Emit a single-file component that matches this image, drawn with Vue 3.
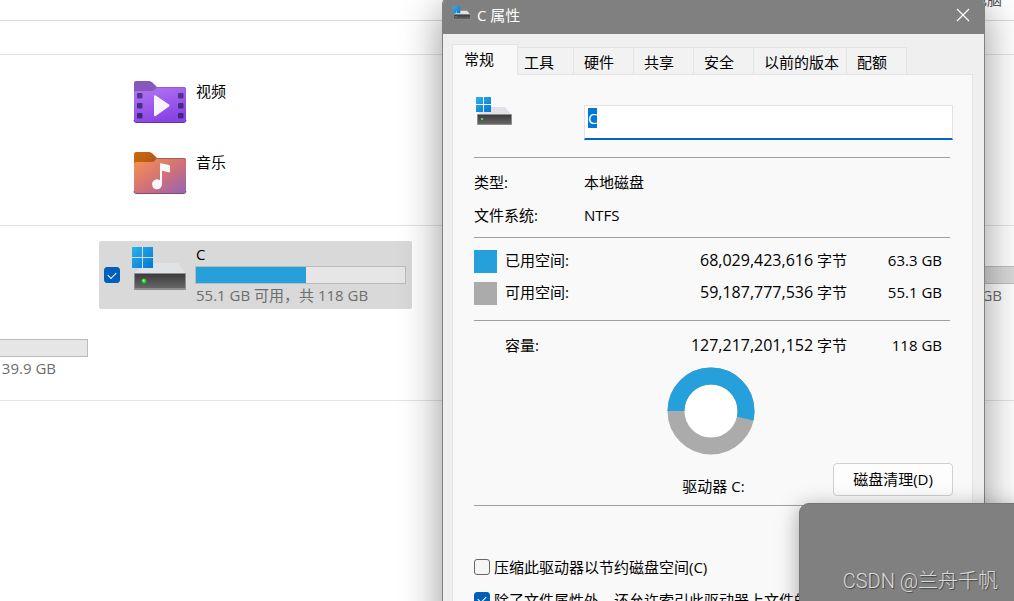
<script setup>
import { ref, onMounted } from 'vue'

const tabs = ['常规', '工具', '硬件', '共享', '安全', '以前的版本', '配额']
const activeTab = ref('常规')
const label = ref('C')
const labelBox = ref(null)
const selected = ref(true)
const compress = ref(false)
const indexed = ref(true)

const usedPercent = 53.5
const usage = [
  { kind: 'used', name: '已用空间:', bytes: '68,029,423,616', size: '63.3 GB' },
  { kind: 'free', name: '可用空间:', bytes: '59,187,777,536', size: '55.1 GB' },
]

onMounted(() => {
  labelBox.value.focus()
  labelBox.value.select()
})
</script>

<template>
  <div class="desktop">
    <svg class="defs" width="0" height="0" aria-hidden="true">
      <defs>
        <linearGradient id="win" x1="0" y1="0" x2="1" y2="1">
          <stop offset="0" stop-color="#2eb0ec" /><stop offset="1" stop-color="#0078d4" />
        </linearGradient>
        <linearGradient id="front" x1="0" y1="0" x2="0" y2="1">
          <stop offset="0" stop-color="#3c3c3c" /><stop offset="1" stop-color="#676767" />
        </linearGradient>
        <linearGradient id="violet" x1="0" y1="0" x2="0.4" y2="1">
          <stop offset="0" stop-color="#b578f4" /><stop offset="1" stop-color="#8a44e4" />
        </linearGradient>
        <linearGradient id="sunset" x1="0" y1="0" x2="1" y2="1">
          <stop offset="0" stop-color="#f9944f" /><stop offset="0.55" stop-color="#cf7079" /><stop offset="1" stop-color="#9464b8" />
        </linearGradient>
        <linearGradient id="amber" x1="0" y1="0" x2="1" y2="0.6">
          <stop offset="0" stop-color="#cf6a0c" /><stop offset="1" stop-color="#a8561c" />
        </linearGradient>
      </defs>
      <symbol id="drive" viewBox="0 0 55 43">
        <path d="M12 16H46L54 27H2Z" fill="#e1e2e6" />
        <rect x="2" y="26" width="52" height="17" rx="1" fill="#8d8d8d" />
        <rect x="3" y="27" width="50" height="14" fill="url(#front)" />
        <circle cx="12" cy="34" r="2.4" fill="#1fd81f" /><circle cx="11.6" cy="33.6" r="1" fill="#a4ff9a" />
        <path d="M0 0H10V10H0ZM11 0H21V10H11ZM0 11H10V21H0ZM11 11H21V21H11Z" fill="url(#win)" />
      </symbol>
      <symbol id="drive-small" viewBox="0 0 37 29">
        <path d="M8 10H29L36 18H1Z" fill="#e1e2e6" />
        <rect x="1" y="17" width="35" height="11" rx="1" fill="#8d8d8d" />
        <rect x="2" y="18" width="33" height="9" fill="url(#front)" />
        <rect x="5" y="21" width="2" height="2" fill="#3be63b" />
        <path d="M0 0H7V7H0ZM8 0H15V7H8ZM0 8H7V15H0ZM8 8H15V15H8Z" fill="url(#win)" />
      </symbol>
    </svg>

    <main class="explorer">
      <header class="toolbar"><span class="crumb">此电脑</span></header>
      <div class="strip"></div>

      <section class="group folders">
        <div class="tile folder">
          <svg class="icon" width="54" height="43" viewBox="0 0 54 43">
            <path d="M1 14V2Q1 0 3 0H16Q18 0 19.500 1.500L24 6H29V14Z" fill="#8458bd" />
            <path d="M1 12Q1 10 3 10H19Q21 10 22.500 8L24 6H51Q53 6 53 8V39Q53 41 51 41H3Q1 41 1 39Z" fill="url(#violet)" />
            <path d="M1 39Q1 41.500 3 41.500H51Q53 41.500 53 39" fill="none" stroke="#6730a8" />
            <path d="M24 6.500H51Q52.500 6.500 52.500 8.500" fill="none" stroke="#9859d0" />
            <g fill="#3f2878">
              <rect x="4" y="12" width="5.500" height="5.500" rx="1" opacity=".8" /><rect x="4" y="22" width="5.500" height="5.500" rx="1" opacity=".9" /><rect x="4" y="32" width="5.500" height="5.500" rx="1" />
              <rect x="45" y="12" width="5.500" height="5.500" rx="1" opacity=".8" /><rect x="45" y="22" width="5.500" height="5.500" rx="1" opacity=".9" /><rect x="45" y="32" width="5.500" height="5.500" rx="1" />
            </g>
            <path d="M21 15.500Q21 13.500 22.700 14.500L36 23.500Q37 24.500 36 25.500L22.700 35Q21 36 21 34Z" fill="#f8f4fd" />
          </svg>
          <span class="name">视频</span>
        </div>
        <div class="tile folder">
          <svg class="icon" width="54" height="43" viewBox="0 0 54 43">
            <path d="M1 14V2Q1 0 3 0H16Q18 0 19.500 1.500L24 6H29V14Z" fill="url(#amber)" />
            <path d="M1 12Q1 10 3 10H19Q21 10 22.500 8L24 6H51Q53 6 53 8V39Q53 41 51 41H3Q1 41 1 39Z" fill="url(#sunset)" />
            <path d="M1 39Q1 41.500 3 41.500H51Q53 41.500 53 39" fill="none" stroke="#8b4864" />
            <path d="M24 6.500H51Q52.500 6.500 52.500 8.500" fill="none" stroke="#a85e4e" />
            <path d="M27 12Q27 11 28 11.200L36 13Q37 13.300 37 14.300V19.500Q37 20.600 36 20.300L29 18.700V32A5 5 0 1 1 27 28.300Z" fill="#fdf8f8" />
          </svg>
          <span class="name">音乐</span>
        </div>
      </section>

      <section class="group drives">
        <div class="tile drive chosen">
          <input v-model="selected" class="check" type="checkbox" aria-label="C" />
          <svg class="icon" width="55" height="43"><use href="#drive" /></svg>
          <div class="facts">
            <span class="name">C</span>
            <div class="bar"><div class="fill" :style="{ width: usedPercent - 1 + '%' }"></div></div>
            <span class="note">55.1 GB 可用，共 118 GB</span>
          </div>
        </div>
        <div class="tile drive far">
          <div class="facts">
            <div class="bar dim"></div>
            <span class="note tail">GB</span>
          </div>
        </div>
        <div class="tile drive near">
          <div class="facts">
            <div class="bar"></div>
            <span class="note tail">39.9 GB</span>
          </div>
        </div>
      </section>
    </main>

    <section class="dialog" role="dialog" aria-labelledby="title">
      <header class="titlebar">
        <svg class="app-icon" width="18" height="14"><use href="#drive-small" /></svg>
        <h1 id="title">C 属性</h1>
        <button class="close" aria-label="关闭">
          <svg width="14" height="14" viewBox="0 0 14 14"><path d="M1 1L13 13M13 1L1 13" stroke="#fff" stroke-width="1.200" /></svg>
        </button>
      </header>

      <nav class="tabs" role="tablist">
        <button v-for="tab in tabs" :key="tab" role="tab" class="tab" :class="{ active: tab === activeTab }" :aria-selected="tab === activeTab" @click="activeTab = tab">{{ tab }}</button>
      </nav>

      <div class="panel">
        <div class="identity">
          <svg class="drive-icon" width="37" height="29"><use href="#drive-small" /></svg>
          <input ref="labelBox" v-model="label" class="label-box" type="text" aria-label="卷标" spellcheck="false" />
        </div>
        <hr />
        <dl class="details">
          <dt>类型:</dt><dd>本地磁盘</dd>
          <dt>文件系统:</dt><dd>NTFS</dd>
        </dl>
        <hr />
        <table class="usage">
          <colgroup><col class="c-key" /><col /><col class="c-bytes" /><col class="c-size" /></colgroup>
          <tbody>
            <tr v-for="row in usage" :key="row.kind">
              <td><div class="swatch" :class="row.kind"></div></td>
              <th scope="row">{{ row.name }}</th>
              <td class="num"><span class="bytes">{{ row.bytes }}</span> 字节</td>
              <td class="num">{{ row.size }}</td>
            </tr>
          </tbody>
        </table>
        <hr />
        <table class="usage total">
          <colgroup><col class="c-key" /><col /><col class="c-bytes" /><col class="c-size" /></colgroup>
          <tbody>
            <tr>
              <td></td>
              <th scope="row">容量:</th>
              <td class="num"><span class="bytes">127,217,201,152</span> 字节</td>
              <td class="num">118 GB</td>
            </tr>
          </tbody>
        </table>
        <div class="chart">
          <svg width="88" height="88" viewBox="0 0 88 88">
            <circle cx="44" cy="44" r="35" fill="#fff" stroke="#ababab" stroke-width="17" />
            <circle cx="44" cy="44" r="35" fill="none" stroke="#26a0da" stroke-width="17" pathLength="100" :stroke-dasharray="usedPercent + ' 100'" transform="rotate(180 44 44)" />
          </svg>
        </div>
        <div class="actions">
          <span class="drive-name">驱动器 C:</span>
          <button class="cleanup">磁盘清理(D)</button>
        </div>
        <hr />
        <div class="options">
          <label class="option"><input v-model="compress" class="check" type="checkbox" />压缩此驱动器以节约磁盘空间(C)</label>
          <label class="option"><input v-model="indexed" class="check" type="checkbox" />除了文件属性外，还允许索引此驱动器上文件的</label>
        </div>
      </div>
    </section>

    <aside class="popup"><span class="mark">CSDN @兰舟千帆</span></aside>
  </div>
</template>

<style>
body {
  margin: 0;
}
</style>

<style scoped>
.desktop {
  position: relative;
  height: 100vh;
  overflow: hidden;
  background: #fff;
  color: #000;
  font: 15px/20px "Open Sans", "Noto Sans CJK SC", sans-serif;
}
.desktop *,
.desktop *::before {
  box-sizing: border-box;
}
.defs {
  position: absolute;
}
svg {
  display: block;
  flex: none;
}
button,
input {
  font: inherit;
  color: inherit;
  margin: 0;
}
.toolbar {
  height: 21px;
  display: flex;
  justify-content: flex-end;
  padding-right: 12px;
  border-bottom: 1px solid #d9d9d9;
}
.crumb {
  margin-top: -11px;
  color: #555;
}
.strip {
  height: 34px;
  border-bottom: 1px solid #e3e3e3;
}
.group {
  display: grid;
  grid-template-columns: repeat(4, 313px);
  grid-auto-rows: 68px;
  column-gap: 5px;
  padding-bottom: 18px;
  border-bottom: 1px solid #e3e3e3;
  margin-left: -219px;
}
.folders {
  row-gap: 3px;
  padding-top: 13px;
}
.drives {
  row-gap: 5px;
  padding-top: 15px;
}
.tile {
  display: flex;
  border-radius: 2px;
}
.folder {
  grid-column: 2;
  gap: 9px;
  padding: 13px 0 0 34px;
}
.drive {
  padding: 3px 6px 0 5px;
}
.chosen {
  grid-area: 1 / 2;
  background: #d9d9d9;
}
.far {
  grid-area: 1 / 4;
}
.near {
  grid-area: 2 / 1;
}
.chosen .check {
  margin-top: 23px;
}
.chosen .icon {
  margin: 3px 8px 0 12px;
}
.facts {
  flex: none;
  display: flex;
  flex-direction: column;
  justify-content: flex-end;
  width: 210px;
  height: 61px;
  margin-left: auto;
}
.chosen .facts {
  width: 211px;
  margin-left: 0;
}
.bar {
  height: 18px;
  margin: 2px 0 1px;
  border: 1px solid #bcbcbc;
  background: #e6e6e6;
}
.dim {
  background: #d9d9d9;
}
.fill {
  height: 100%;
  background: #26a0da;
}
.note {
  color: #6d6d6d;
  white-space: nowrap;
}
.chosen .name,
.chosen .note {
  padding-left: 1px;
}
.tail {
  text-align: right;
  padding-right: 32px;
}
.far .tail {
  padding-right: 40px;
}
.check {
  appearance: none;
  flex: none;
  width: 16px;
  height: 16px;
  border: 1px solid #666;
  border-radius: 3px;
  background: #f5f5f5;
  display: grid;
  place-items: center;
}
.check:checked {
  border-color: #005fb8;
  background: #005fb8;
}
.check:checked::before {
  content: "";
  width: 8px;
  height: 5px;
  margin-bottom: 2px;
  border: solid #fff;
  border-width: 0 0 1px 1px;
  transform: rotate(-45deg);
}
.dialog {
  position: absolute;
  left: 442px;
  top: -4px;
  width: 543px;
  border: 1px solid #808080;
  border-radius: 8px;
  background: #efefef;
  box-shadow: 0 12px 42px rgba(0, 0, 0, 0.42);
}
.titlebar {
  display: flex;
  align-items: center;
  gap: 6px;
  height: 37px;
  padding: 0 14px 2px 10px;
  border-radius: 7px 7px 0 0;
  background: #808080;
  color: #fff;
}
.app-icon {
  margin-bottom: 4px;
}
h1 {
  margin: 0;
  font-size: 15px;
  font-weight: 400;
}
.close {
  margin-left: auto;
  padding: 0;
  border: 0;
  background: none;
}
.tabs {
  display: flex;
  align-items: flex-end;
  height: 40px;
  padding-left: 9px;
}
.tab {
  height: 27px;
  padding: 2px 7px 0 10px;
  min-width: 60px;
  border: 1px solid #e3e3e3;
  border-width: 1px 1px 0 0;
  background: #f2f2f2;
  text-align: left;
  white-space: nowrap;
}
.tab.active {
  z-index: 1;
  height: 31px;
  min-width: 66px;
  margin: 0 -4px -1px 0;
  padding: 0 11px 2px;
  border-left-width: 1px;
  background: #f9f9f9;
}
.panel {
  margin: 0 11px 12px 9px;
  padding: 22px 19px 24px 21px;
  border: 1px solid #e3e3e3;
  background: #f9f9f9;
}
hr {
  height: 1px;
  margin: 0 3px 0 0;
  border: 0;
  background: #a0a0a0;
}
.identity {
  display: flex;
  justify-content: space-between;
  padding-bottom: 17px;
}
.drive-icon {
  margin-left: 2px;
}
.label-box {
  width: 369px;
  height: 35px;
  margin-top: 8px;
  padding: 2px 3px 11px;
  border: 1px solid #e3e3e3;
  border-bottom: 2px solid #0067c0;
  outline: 0;
  background: #fff;
}
.label-box::selection {
  background: #0078d7;
  color: #fff;
}
.details {
  display: grid;
  grid-template-columns: 110px 1fr;
  margin: 0;
  padding: 8px 0 5px;
  line-height: 33px;
}
dd {
  margin: 0;
}
.usage {
  width: 468px;
  margin: 7px 0 11px;
  border-collapse: collapse;
  table-layout: fixed;
}
.total {
  margin: 9px 0 5px;
}
.usage tr {
  height: 32px;
}
.usage td,
.usage th {
  padding: 0;
  font-weight: 400;
  text-align: left;
}
.usage th,
.usage .num {
  padding-bottom: 2px;
}
.usage .num {
  text-align: right;
  white-space: nowrap;
}
.bytes {
  font-size: 16px;
}
.c-key {
  width: 31px;
}
.c-bytes {
  width: 180px;
}
.c-size {
  width: 95px;
}
.swatch {
  width: 23px;
  height: 23px;
}
.used {
  background: #26a0da;
}
.free {
  background: #ababab;
}
.chart {
  display: flex;
  justify-content: center;
  padding-right: 5px;
}
.actions {
  display: grid;
  grid-template-columns: 1fr auto 1fr;
  align-items: end;
  padding: 8px 0 9px;
}
.drive-name {
  grid-column: 2;
}
.cleanup {
  justify-self: end;
  width: 120px;
  height: 33px;
  padding: 0 0 2px;
  border: 1px solid #d0d0d0;
  border-radius: 4px;
  background: #fdfdfd;
}
.options {
  padding-top: 44px;
}
.option {
  display: flex;
  align-items: center;
  gap: 4px;
  height: 33px;
  white-space: nowrap;
}
.popup {
  position: absolute;
  left: 799px;
  right: -10px;
  top: 503px;
  bottom: -10px;
  display: flex;
  justify-content: flex-end;
  align-items: flex-end;
  padding: 0 25px 17px 0;
  border: 1px solid #747474;
  border-radius: 10px;
  background: #808080;
  box-shadow: 0 4px 22px rgba(0, 0, 0, 0.35);
}
.mark {
  font: 20px/24px Roboto, "Noto Sans CJK SC", sans-serif;
  font-weight: 300;
  color: #dadada;
  text-shadow: 1px 1px 1px #444;
}
</style>
